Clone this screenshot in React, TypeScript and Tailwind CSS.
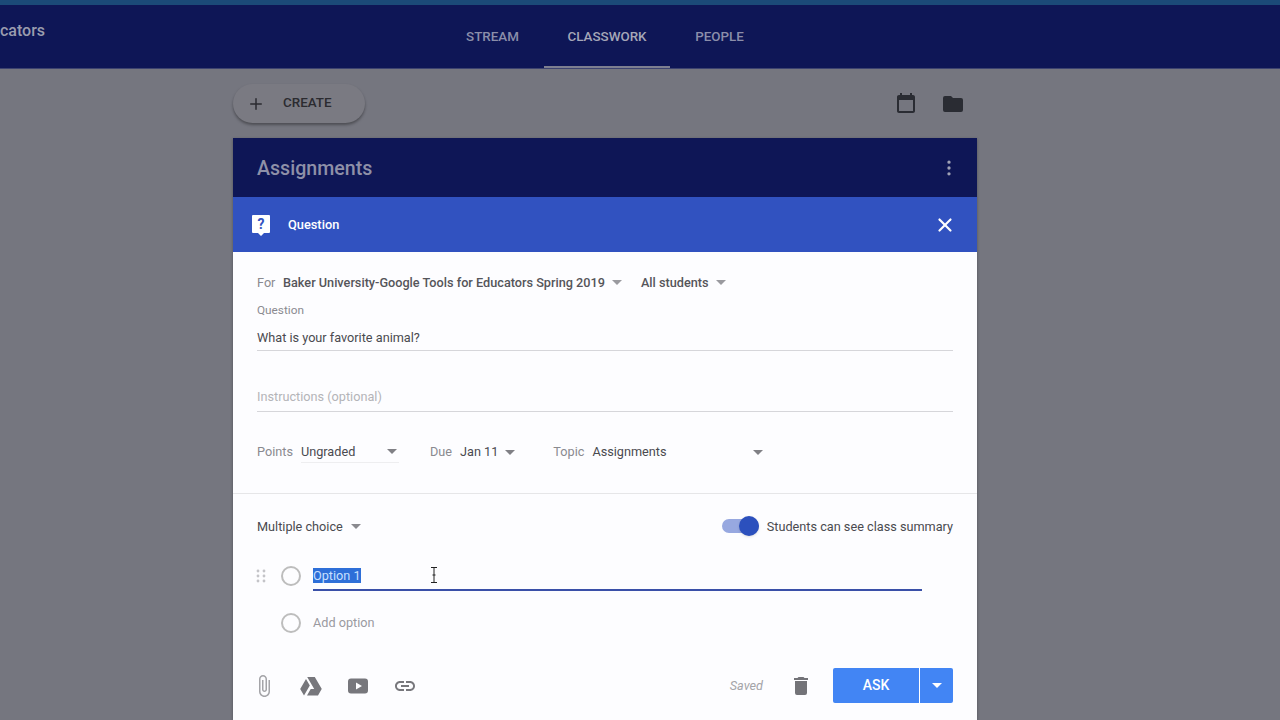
import React from 'react';
import { Plus, X, MoreVertical } from 'lucide-react';

const font = { fontFamily: 'Roboto, sans-serif' };

const Caret = ({ className = '' }: { className?: string }) => (
  <svg width="10" height="5" viewBox="0 0 10 5" className={className}>
    <path d="M0 0h10L5 5z" fill="currentColor" />
  </svg>
);

const Radio = () => <div className="w-[20px] h-[20px] rounded-full border-2 border-[#bdbdbd]" />;

export default function App() {
  return (
    <div className="h-[720px] w-[1280px] overflow-hidden flex flex-col bg-[#75767f]" style={font}>
      <div className="h-[5px] bg-[#1b4a78]" />
      <nav className="h-[64px] bg-[#0e1656] flex shrink-0 border-b border-[#3d4370] relative">
        <div className="absolute left-0 top-[14px] text-[16px] font-medium text-[#9a9cae]">cators</div>
        <div className="flex ml-[443px] text-[13.4px] font-medium">
          <div className="w-[101px] flex justify-center pt-[22px] pr-[2px] text-[#8b8eaa]">STREAM</div>
          <div className="w-[126px] flex justify-center pt-[22px] text-[#a5a7b8] border-b-[2px] border-[#7d7f90]">CLASSWORK</div>
          <div className="w-[99px] flex justify-center pt-[22px] text-[#8b8eaa]">PEOPLE</div>
        </div>
      </nav>

      <div className="w-[744px] ml-[233px] flex-1 flex flex-col">
        <div className="flex items-center justify-between h-[69px] shrink-0">
          <div className="w-[132px] h-[39px] rounded-full bg-[#7a7a82] shadow-[0_2px_3px_rgba(0,0,0,0.35)] flex items-center pl-[14px] gap-[18px] text-[#2b2b30]">
            <Plus size={18} strokeWidth={2} />
            <span className="text-[13.4px] font-medium">CREATE</span>
          </div>
          <div className="flex items-center gap-[23px] pr-[12px] text-[#2a2c33]">
            <svg width="24" height="24" viewBox="0 0 24 24" fill="currentColor">
              <path d="M19 3h-1V1h-2v2H8V1H6v2H5c-1.110 0-2 .9-2 2v14c0 1.100.89 2 2 2h14c1.100 0 2-.9 2-2V5c0-1.100-.9-2-2-2zm0 16H5V8h14v11z" />
            </svg>
            <svg width="24" height="24" viewBox="0 0 24 24" fill="currentColor"><path d="M10 4H4a2 2 0 0 0-2 2v12a2 2 0 0 0 2 2h16a2 2 0 0 0 2-2V8a2 2 0 0 0-2-2h-8z" /></svg>
          </div>
        </div>

        <div className="flex-1 flex flex-col shadow-[0_1px_3px_rgba(0,0,0,0.3)]">
          <div className="h-[59px] bg-[#0e1656] flex items-center justify-between pl-[24px] pr-[18px] pt-[2px] shrink-0">
            <span className="text-[19.6px] font-medium text-[#8e90a8]">Assignments</span>
            <MoreVertical size={20} className="text-[#a0a2b5] mt-[-2px]" />
          </div>
          <div className="h-[55px] bg-[#3152c0] flex items-center justify-between pl-[18px] pr-[21px] shrink-0">
            <div className="flex items-center gap-[17px]">
              <svg width="20" height="22" viewBox="0 0 20 22">
                <path d="M2 1h16a1 1 0 0 1 1 1v16a1 1 0 0 1-1 1h-5l-3 3-3-3H2a1 1 0 0 1-1-1V2a1 1 0 0 1 1-1z" fill="#fff" />
                <text x="10" y="15" textAnchor="middle" fontSize="14" fontWeight="700" fill="#3152c0" fontFamily="Roboto">?</text>
              </svg>
              <span className="text-[12.8px] font-medium text-white">Question</span>
            </div>
            <X size={22} strokeWidth={2.4} className="text-white" />
          </div>

          <div className="flex-1 bg-[#fdfdff] flex flex-col text-[12.7px] text-[#4a4a4f]">
            <div className="flex flex-col px-[24px] pt-[21px]">
              <div className="flex items-center h-[19px]">
                <span className="text-[#8a8a8f] w-[26px]">For</span>
                <span className="font-medium text-[#55555a] whitespace-nowrap">Baker University-Google Tools for Educators Spring 2019</span>
                <Caret className="ml-[7px] text-[#9a9a9f]" />
                <span className="font-medium text-[#55555a] ml-[19px]">All students</span>
                <Caret className="ml-[7px] text-[#9a9a9f]" />
              </div>
              <div className="text-[11.8px] text-[#8a8a8f] mt-[10px] h-[17px]">Question</div>
              <div className="mt-[9px] h-[23px] border-b border-[#d6d6da]">What is your favorite animal?</div>
              <div className="mt-[36px] h-[25px] border-b border-[#d6d6da] text-[#b4b4b8]">Instructions (optional)</div>
              <div className="flex items-center mt-[29px] h-[22px]">
                <span className="text-[#8a8a8f]">Points</span>
                <div className="ml-[8px] w-[98px] h-[22px] flex items-center justify-between pr-[2px] border-b border-[#eeeef0]">
                  <span>Ungraded</span>
                  <Caret className="text-[#808085]" />
                </div>
                <span className="text-[#8a8a8f] ml-[31px]">Due</span>
                <span className="ml-[8px]">Jan 11</span>
                <Caret className="ml-[7px] text-[#808085]" />
                <span className="text-[#8a8a8f] ml-[38px]">Topic</span>
                <span className="ml-[8px] w-[161px]">Assignments</span>
                <Caret className="text-[#808085]" />
              </div>
            </div>

            <div className="border-t border-[#e6e6e8] mt-[30px] px-[24px] pt-[22px]">
              <div className="flex items-center justify-between h-[21px]">
                <div className="flex items-center gap-[8px]">
                  <span>Multiple choice</span>
                  <Caret className="text-[#8a8a8f]" />
                </div>
                <div className="flex items-center gap-[8px]">
                  <div className="relative w-[37px] h-[14px] rounded-full bg-[#97a8e0]">
                    <div className="absolute right-0 top-[-3px] w-[20px] h-[20px] rounded-full bg-[#2c50bd] shadow-sm" />
                  </div>
                  <span>Students can see class summary</span>
                </div>
              </div>

              <div className="flex items-center mt-[24px] ml-[-1px] h-[30px] relative">
                <svg width="10" height="14" viewBox="0 0 10 14" fill="#c4c4c8" className="shrink-0">
                  <circle cx="2" cy="2" r="1.4" /><circle cx="8" cy="2" r="1.4" />
                  <circle cx="2" cy="7" r="1.4" /><circle cx="8" cy="7" r="1.4" />
                  <circle cx="2" cy="12" r="1.4" /><circle cx="8" cy="12" r="1.4" />
                </svg>
                <div className="ml-[15px]"><Radio /></div>
                <div className="ml-[12px] w-[609px] h-[30px] border-b-2 border-[#3a50a8] flex items-center">
                  <span className="bg-[#2e6fd8] text-[#c8e0ff] h-[15px] leading-[15px]">Option 1</span>
                </div>
                <div className="absolute left-[174px] top-[6px]">
                  <svg width="8" height="16" viewBox="0 0 8 16" fill="none" stroke="#222" strokeWidth="1"><path d="M1 .5h6M1 15.500h6M4 .5v15M2.500 8h3" /></svg>
                </div>
              </div>

              <div className="flex items-center mt-[17px] h-[30px] pl-[24px]">
                <Radio />
                <span className="ml-[12px] text-[#9a9a9f]">Add option</span>
              </div>

              <div className="flex items-center justify-between mt-[30px]">
                <div className="flex items-center gap-[23px] ml-[-5px] text-[#77777c]">
                  <svg width="24" height="24" viewBox="0 0 24 24" fill="#a4a4a8">
                    <path d="M16.500 6v11.500c0 2.210-1.790 4-4 4s-4-1.790-4-4V5c0-1.380 1.120-2.500 2.500-2.500s2.500 1.120 2.500 2.500v10.500c0 .55-.45 1-1 1s-1-.45-1-1V6H10v9.500c0 1.380 1.120 2.500 2.500 2.500s2.500-1.120 2.500-2.500V5c0-2.210-1.790-4-4-4S7 2.790 7 5v12.500c0 3.040 2.460 5.500 5.500 5.500s5.500-2.460 5.500-5.500V6h-1.500z" />
                  </svg>
                  <svg width="24" height="24" viewBox="0 0 24 24" fill="currentColor">
                    <path d="M8.200 3h7.600l7 12h-7.600zM7 5l3.800 6.500L5 21.500 1.200 15zM8 21.500l3.700-6.500h11l-3.700 6.500z" />
                  </svg>
                  <svg width="24" height="24" viewBox="0 0 24 24" fill="currentColor">
                    <path fillRule="evenodd" d="M5 4.500h14a3 3 0 0 1 3 3v9a3 3 0 0 1-3 3H5a3 3 0 0 1-3-3v-9a3 3 0 0 1 3-3zM10 8.500v7l6-3.500z" />
                  </svg>
                  <svg width="24" height="24" viewBox="0 0 24 24" fill="currentColor">
                    <path d="M3.900 12c0-1.710 1.390-3.100 3.100-3.100h4V7H7c-2.760 0-5 2.240-5 5s2.240 5 5 5h4v-1.900H7c-1.710 0-3.100-1.390-3.100-3.100zM8 13h8v-2H8v2zm9-6h-4v1.900h4c1.710 0 3.100 1.390 3.100 3.100s-1.390 3.100-3.100 3.100h-4V17h4c2.760 0 5-2.240 5-5s-2.240-5-5-5z" />
                  </svg>
                </div>
                <div className="flex items-center">
                  <span className="italic text-[12.7px] text-[#a4a4a8]">Saved</span>
                  <svg width="24" height="24" viewBox="0 0 24 24" fill="#737378" className="ml-[26px]">
                    <path d="M6 19a2 2 0 0 0 2 2h8a2 2 0 0 0 2-2V7H6zM19 4h-3.500l-1-1h-5l-1 1H5v2h14z" />
                  </svg>
                  <div className="ml-[20px] flex h-[35px] rounded-[2px] overflow-hidden bg-[#4285f4] text-white">
                    <div className="w-[86px] flex items-center justify-center text-[14px] font-medium">ASK</div>
                    <div className="w-[34px] flex items-center justify-center border-l border-white"><Caret /></div>
                  </div>
                </div>
              </div>
            </div>
          </div>
        </div>
      </div>
    </div>
  );
}
